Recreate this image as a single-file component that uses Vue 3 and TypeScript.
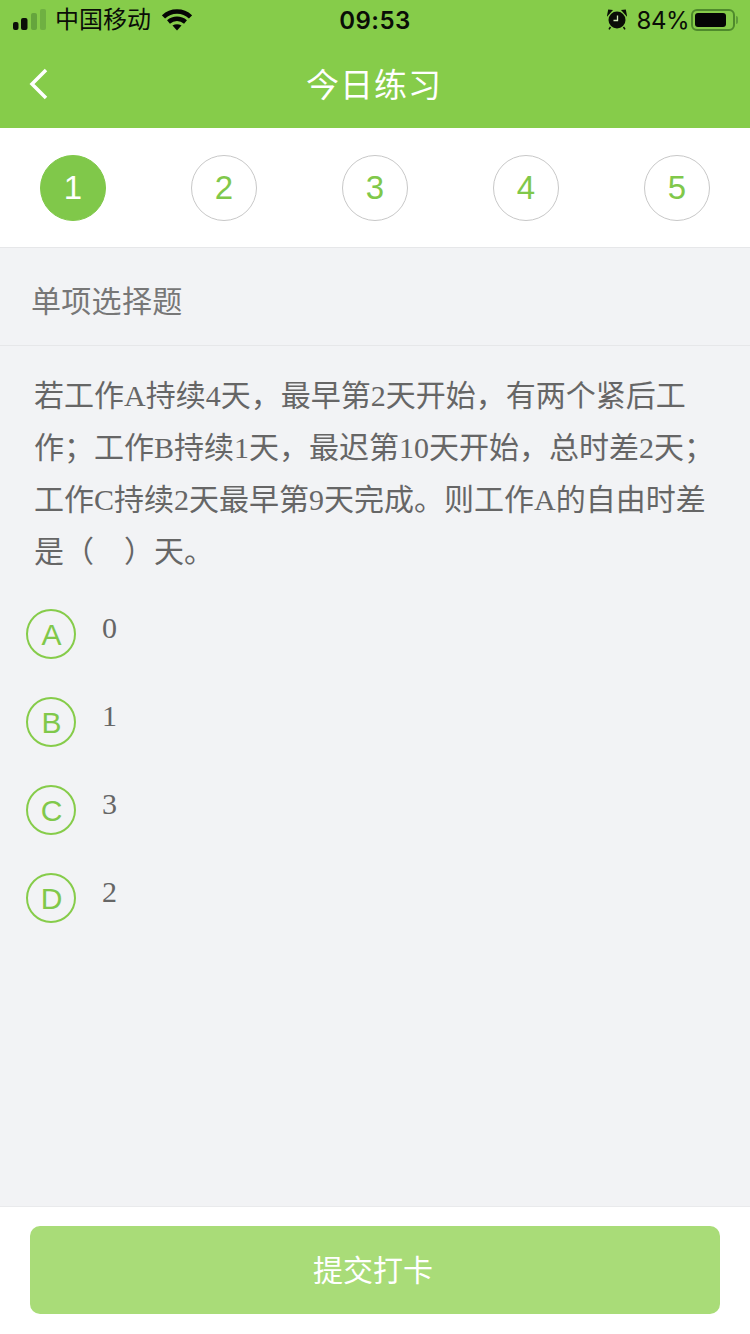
<script setup lang="ts">
const steps: number[] = [1, 2, 3, 4, 5]
const lines: string[] = [
  '若工作A持续4天，最早第2天开始，有两个紧后工',
  '作；工作B持续1天，最迟第10天开始，总时差2天；',
  '工作C持续2天最早第9天完成。则工作A的自由时差',
  '是（　）天。',
]
const options = [
  { key: 'A', text: '0' },
  { key: 'B', text: '1' },
  { key: 'C', text: '3' },
  { key: 'D', text: '2' },
]
</script>

<template>
  <div class="page">
    <header class="header">
      <div class="status">
        <div class="status-left">
          <svg class="signal" width="34" height="22" viewBox="0 0 34 22">
            <rect x="0" y="13" width="5.500" height="8" rx="2" fill="#0c0f08" />
            <rect x="8" y="9" width="6.500" height="12" rx="2" fill="#0c0f08" />
            <rect x="18" y="4" width="6" height="17" rx="2" fill="#65a53d" />
            <rect x="27" y="0" width="6" height="21" rx="2" fill="#6fb042" />
          </svg>
          <span class="carrier">中国移动</span>
          <svg class="wifi" width="30" height="22" viewBox="0 0 30 22">
            <path d="M1.500 8C9 0.800 21 0.800 28.500 8" fill="none" stroke="#050505" stroke-width="4.500" />
            <path d="M6.500 13C11.500 8.800 18.500 8.800 23.500 13" fill="none" stroke="#050505" stroke-width="4.500" />
            <path d="M10.500 16.500Q15 14 19.500 16.500L15 21.500Z" fill="#050505" />
          </svg>
        </div>
        <div class="time">09:53</div>
        <div class="status-right">
          <svg class="alarm" width="20" height="21" viewBox="0 0 20 21">
            <circle cx="10" cy="11" r="8.500" fill="#0a0d07" />
            <path d="M1 5.500 4.500 1.500 1.800 1.200ZM19 5.500 15.500 1.500 18.200 1.200Z" fill="#0a0d07" stroke="#0a0d07" stroke-width="1.500" />
            <path d="M3.500 18 2 20.300M16.500 18 18 20.300" stroke="#0a0d07" stroke-width="1.500" />
            <path d="M10.500 6.500V11.500H6.500" fill="none" stroke="#cfe8b8" stroke-width="1.300" />
          </svg>
          <span class="percent">84%</span>
          <div class="battery">
            <div class="battery-shell"><div class="battery-fill"></div></div>
            <div class="battery-nub"></div>
          </div>
        </div>
      </div>
      <div class="nav">
        <svg class="back" width="20" height="32" viewBox="0 0 20 32">
          <path d="M17 2 3 16 17 30" fill="none" stroke="#fff" stroke-width="3.500" />
        </svg>
        <h1 class="title">今日练习</h1>
      </div>
    </header>

    <div class="steps">
      <div v-for="n in steps" :key="n" class="step" :class="{ active: n === 1 }">{{ n }}</div>
    </div>

    <div class="type">单项选择题</div>

    <main class="main">
      <div class="question">
        <p v-for="line in lines" :key="line">{{ line }}</p>
      </div>
      <ul class="options">
        <li v-for="o in options" :key="o.key" class="option">
          <span class="badge">{{ o.key }}</span>
          <span class="answer">{{ o.text }}</span>
        </li>
      </ul>
    </main>

    <footer class="footer">
      <button class="submit" type="button">提交打卡</button>
    </footer>
  </div>
</template>

<style scoped>
.page {
  width: 750px;
  height: 1334px;
  display: flex;
  flex-direction: column;
  background: #f2f3f5;
  font-family: "Liberation Sans", "Noto Sans CJK SC", sans-serif;
  overflow: hidden;
}
.header {
  height: 128px;
  background: #86cc4a;
  flex: none;
}
.status {
  height: 40px;
  display: grid;
  grid-template-columns: 1fr auto 1fr;
  align-items: center;
  color: #0a0d07;
}
.status-left {
  display: flex;
  align-items: center;
  padding-left: 13px;
}
.signal { margin-top: -1px; }
.carrier {
  font-size: 24px;
  margin-left: 8px;
  line-height: 40px;
}
.wifi { margin-left: 11px; margin-top: -1px; }
.time {
  font-size: 24px;
  font-weight: 600;
  letter-spacing: 0.5px;
  font-family: Inter, "Liberation Sans", sans-serif;
  margin-top: 1px;
}
.status-right {
  display: flex;
  align-items: center;
  justify-content: flex-end;
  padding-right: 12px;
}
.alarm { margin-top: -2px; }
.percent {
  font-size: 24px;
  letter-spacing: -0.5px;
  margin-left: 10px;
  font-family: Inter, "Liberation Sans", sans-serif;
  font-weight: 400;
}
.battery {
  display: flex;
  align-items: center;
  margin-left: 2px;
  margin-top: -1px;
}
.battery-shell {
  width: 44px;
  height: 22px;
  box-sizing: border-box;
  border: 2px solid #4f8a2c;
  border-radius: 6px;
  padding: 2px;
}
.battery-fill {
  width: 31px;
  height: 14px;
  background: #050505;
  border-radius: 3px;
}
.battery-nub {
  width: 2px;
  height: 8px;
  margin-left: 1px;
  background: #5f9c3a;
  border-radius: 0 2px 2px 0;
}
.nav {
  height: 88px;
  position: relative;
  display: flex;
  align-items: center;
  justify-content: center;
}
.back {
  position: absolute;
  left: 29px;
  top: 28px;
}
.title {
  margin: -3px 2px 0 0;
  color: #fff;
  font-size: 33px;
  font-weight: 400;
  letter-spacing: 1px;
}
.steps {
  flex: none;
  height: 120px;
  box-sizing: border-box;
  background: #fff;
  border-bottom: 1px solid #e6e7e9;
  padding: 27px 40px 0;
  display: flex;
  justify-content: space-between;
  align-items: flex-start;
}
.step {
  width: 66px;
  height: 66px;
  box-sizing: border-box;
  border: 1px solid #c8c8c8;
  border-radius: 50%;
  color: #80c84a;
  font-size: 33px;
  display: flex;
  align-items: center;
  justify-content: center;
}
.step.active {
  background: #80c84a;
  border-color: #80c84a;
  color: #fff;
}
.type {
  flex: none;
  height: 98px;
  box-sizing: border-box;
  border-bottom: 1px solid #e6e7e9;
  padding-left: 31px;
  color: #777;
  font-size: 30px;
  letter-spacing: 0.3px;
  line-height: 108px;
}
.main {
  flex: 1;
  min-height: 0;
}
.question {
  padding: 24px 34px 0 34px;
  color: #666;
  font-size: 30px;
  line-height: 52px;
  font-family: "Liberation Serif", "Noto Sans CJK SC", serif;
}
.question p {
  margin: 0;
  white-space: nowrap;
}
.options {
  list-style: none;
  margin: 31px 0 0;
  padding: 0 0 0 26px;
}
.option {
  height: 88px;
  display: flex;
  align-items: flex-start;
}
.badge {
  width: 50px;
  height: 50px;
  box-sizing: border-box;
  border: 2px solid #86cc4a;
  border-radius: 50%;
  color: #80c84a;
  font-size: 30px;
  display: flex;
  align-items: center;
  justify-content: center;
  flex: none;
  padding: 2px 0 0 1px;
}
.answer {
  margin-left: 26px;
  margin-top: 1px;
  color: #666;
  font-size: 30px;
  line-height: 36px;
  font-family: "Liberation Serif", serif;
}
.footer {
  flex: none;
  height: 128px;
  box-sizing: border-box;
  background: #fff;
  border-top: 1px solid #e9eaec;
  padding: 19px 30px 0;
}
.submit {
  display: block;
  width: 100%;
  height: 88px;
  border: 0;
  border-radius: 10px;
  background: #a9dc78;
  color: #fff;
  font-family: inherit;
  font-size: 30px;
  padding: 0 4px 4px 0;
}
</style>
